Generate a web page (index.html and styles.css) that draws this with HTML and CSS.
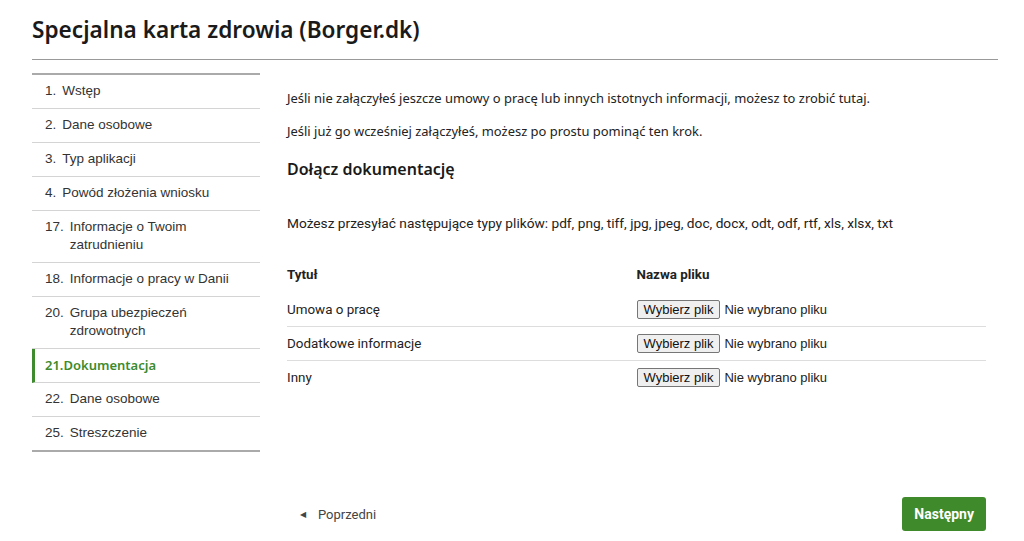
FILE: index.html
```html
<!DOCTYPE html>
<html lang="pl">
<head>
    <meta charset="UTF-8">
    <meta name="viewport" content="width=device-width, initial-scale=1.0">
    <title>Specjalna karta zdrowia (Borger.dk)</title>
    <link rel="stylesheet" href="styles.css">
</head>
<body>

    <div class="page">
        <h1 class="page-title">Specjalna karta zdrowia (Borger.dk)</h1>

        <div class="layout">
            <!-- Kroki formularza -->
            <ul class="steps">
                <li class="step"><span class="step-no">1.</span><span>Wstęp</span></li>
                <li class="step"><span class="step-no">2.</span><span>Dane osobowe</span></li>
                <li class="step"><span class="step-no">3.</span><span>Typ aplikacji</span></li>
                <li class="step"><span class="step-no">4.</span><span>Powód złożenia wniosku</span></li>
                <li class="step"><span class="step-no">17.</span><span>Informacje o Twoim zatrudnieniu</span></li>
                <li class="step"><span class="step-no">18.</span><span>Informacje o pracy w Danii</span></li>
                <li class="step"><span class="step-no">20.</span><span>Grupa ubezpieczeń zdrowotnych</span></li>
                <li class="step active"><span class="step-no">21.</span><span>Dokumentacja</span></li>
                <li class="step"><span class="step-no">22.</span><span>Dane osobowe</span></li>
                <li class="step"><span class="step-no">25.</span><span>Streszczenie</span></li>
            </ul>

            <!-- Treść kroku -->
            <div class="content">
                <p class="intro">Jeśli nie załączyłeś jeszcze umowy o pracę lub innych istotnych informacji, możesz to zrobić tutaj.</p>
                <p class="intro">Jeśli już go wcześniej załączyłeś, możesz po prostu pominąć ten krok.</p>

                <h2 class="section-title">Dołącz dokumentację</h2>

                <p class="file-types">Możesz przesyłać następujące typy plików: pdf, png, tiff, jpg, jpeg, doc, docx, odt, odf, rtf, xls, xlsx, txt</p>

                <table class="files">
                    <thead>
                        <tr>
                            <th>Tytuł</th>
                            <th>Nazwa pliku</th>
                        </tr>
                    </thead>
                    <tbody>
                        <tr>
                            <td>Umowa o pracę</td>
                            <td>
                                <label class="file-pick">
                                    <input type="file" class="file-input">
                                    <span class="file-btn">Wybierz plik</span>
                                    <span class="file-name">Nie wybrano pliku</span>
                                </label>
                            </td>
                        </tr>
                        <tr>
                            <td>Dodatkowe informacje</td>
                            <td>
                                <label class="file-pick">
                                    <input type="file" class="file-input">
                                    <span class="file-btn">Wybierz plik</span>
                                    <span class="file-name">Nie wybrano pliku</span>
                                </label>
                            </td>
                        </tr>
                        <tr>
                            <td>Inny</td>
                            <td>
                                <label class="file-pick">
                                    <input type="file" class="file-input">
                                    <span class="file-btn">Wybierz plik</span>
                                    <span class="file-name">Nie wybrano pliku</span>
                                </label>
                            </td>
                        </tr>
                    </tbody>
                </table>

                <div class="nav">
                    <a href="#" class="prev"><span class="prev-arrow">&#9664;</span>Poprzedni</a>
                    <button class="next">Następny</button>
                </div>
            </div>
        </div>
    </div>

</body>
</html>
```

FILE: styles.css
```css
body {
    font-family: "Liberation Sans", Arial, sans-serif;
    background-color: #fff;
    color: #222;
    margin: 0;
}
.page {
    width: 966px;
    padding: 0 26px 0 32px;
}
.page-title {
    font-family: "Noto Sans", sans-serif;
    font-size: 22.6px;
    font-weight: 600;
    color: #1a1a1a;
    margin: 0;
    padding: 14px 0 14px;
    border-bottom: 1px solid #999;
}
.layout {
    display: flex;
    align-items: flex-start;
    margin-top: 13px;
}
.steps {
    list-style: none;
    width: 228px;
    margin: 0;
    padding: 0;
    border-top: 2px solid #aaa;
    border-bottom: 2px solid #aaa;
    font-size: 13.5px;
    color: #333;
}
.step {
    display: flex;
    padding: 7px 10px 8px 13px;
    line-height: 18px;
    border-bottom: 1px solid #d4d4d4;
}
.step:last-child {
    border-bottom: none;
}
.step-no {
    margin-right: 6px;
}
.step.active {
    border-left: 3px solid #3d8b2d;
    padding-left: 10px;
    color: #3d8b2d;
    font-family: "Noto Sans", sans-serif;
    font-size: 13px;
    font-weight: 600;
}
.step.active .step-no {
    margin-right: 0;
}
.content {
    flex: 1;
    padding-left: 27px;
    padding-right: 12px;
}
.intro {
    font-family: "Noto Sans", sans-serif;
    font-size: 12.95px;
    margin: 15px 0 0;
    line-height: 20px;
}
.intro + .intro {
    margin-top: 13px;
}
.section-title {
    font-family: "Noto Sans", sans-serif;
    font-size: 16px;
    font-weight: 600;
    margin: 17px 0 0;
    color: #1a1a1a;
}
.file-types {
    font-family: Roboto, sans-serif;
    font-size: 13.7px;
    margin: 35px 0 0;
}
.files {
    width: 100%;
    border-collapse: collapse;
    margin-top: 28px;
    font-family: Roboto, sans-serif;
    font-size: 13.4px;
}
.files th {
    text-align: left;
    font-weight: bold;
    padding: 8px 0 11px;
    width: 50%;
}
.files td {
    padding: 7px 0;
    border-bottom: 1px solid #ddd;
}
.files tr:last-child td {
    border-bottom: none;
}
.file-pick {
    display: inline-flex;
    align-items: center;
    font-family: "Liberation Sans", Arial, sans-serif;
    font-size: 13px;
    cursor: pointer;
}
.file-input {
    display: none;
}
.file-btn {
    background-color: #efefef;
    border: 1px solid #767676;
    border-radius: 2px;
    padding: 1px 6px;
    line-height: 15px;
    color: #111;
}
.file-name {
    margin-left: 4px;
    color: #222;
}
.nav {
    display: flex;
    justify-content: space-between;
    align-items: center;
    margin-top: 103px;
}
.prev {
    color: #444;
    text-decoration: none;
    font-family: Roboto, sans-serif;
    font-size: 13px;
    padding-left: 13px;
}
.prev-arrow {
    font-size: 8px;
    margin-right: 12px;
    vertical-align: 2px;
}
.next {
    background-color: #3f8a2a;
    color: #fff;
    border: none;
    border-radius: 3px;
    padding: 9px 12px;
    font-family: Roboto, sans-serif;
    font-weight: bold;
    font-size: 14px;
    cursor: pointer;
}
```
